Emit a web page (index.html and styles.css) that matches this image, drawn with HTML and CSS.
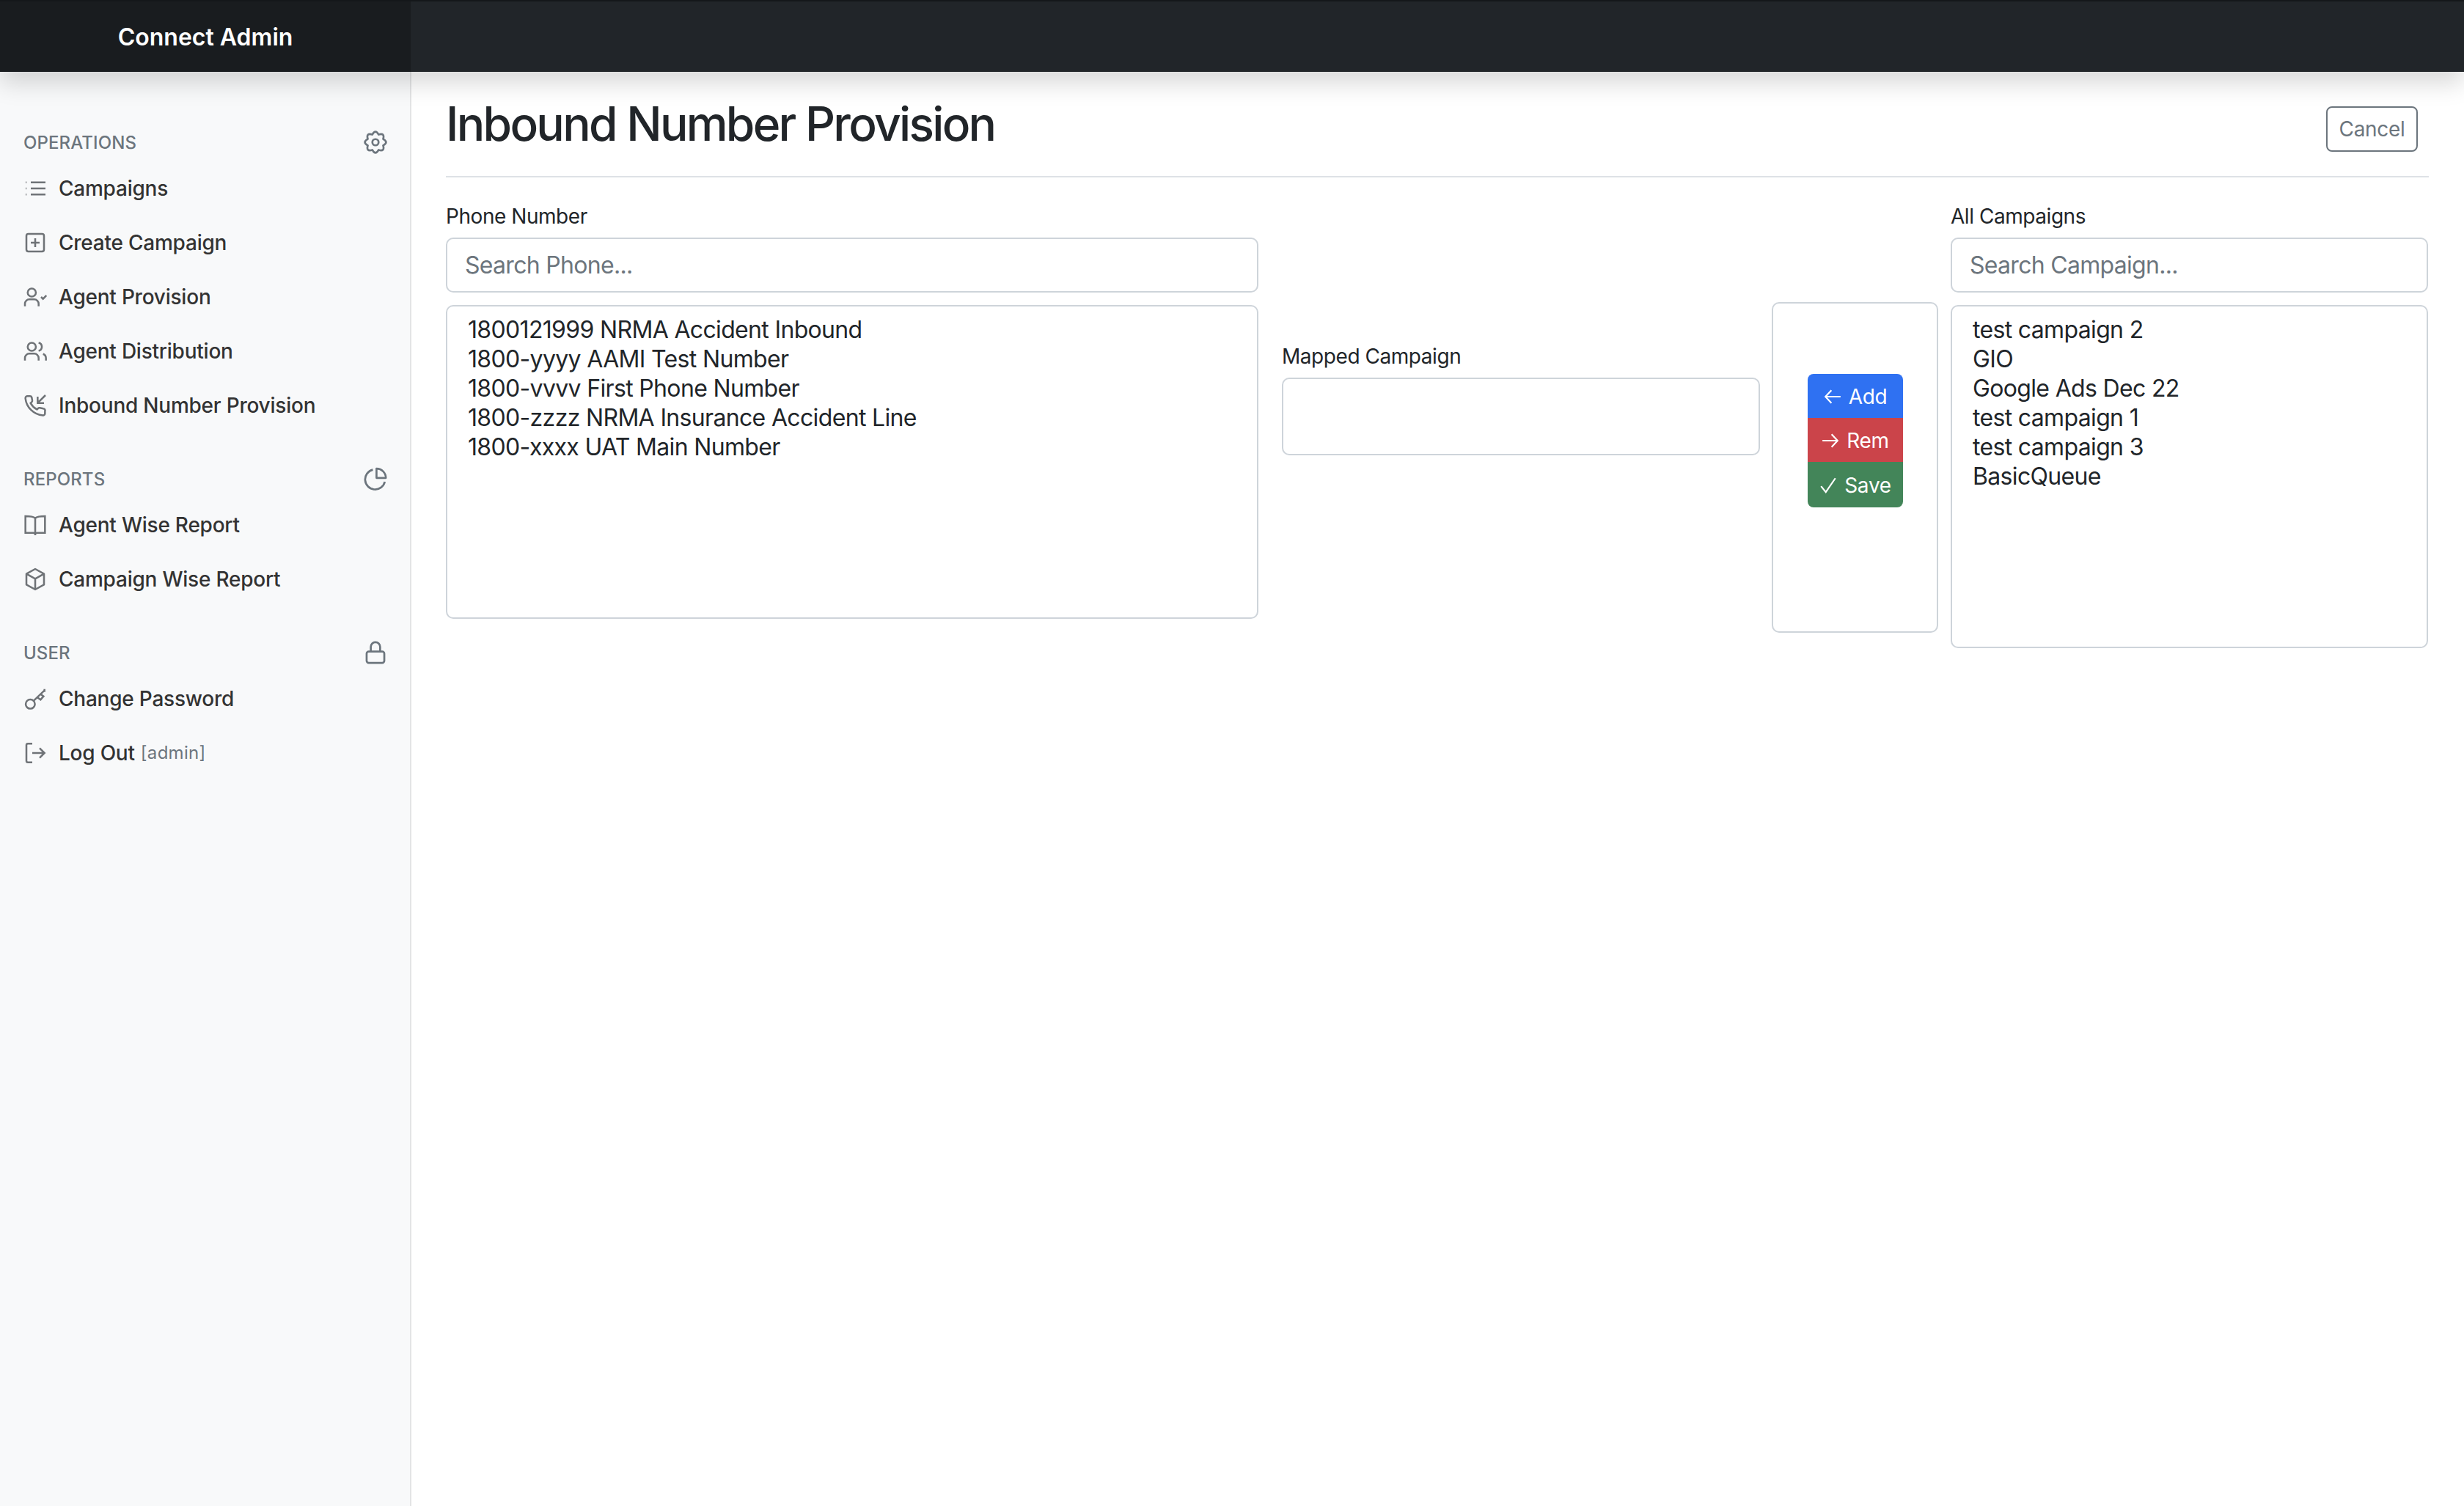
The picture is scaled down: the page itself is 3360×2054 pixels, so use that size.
FILE: index.html
```html
<!DOCTYPE html>
<html lang="en">
<head>
<meta charset="utf-8">
<title>Connect Admin</title>
<link rel="stylesheet" href="styles.css">
</head>
<body>
<svg class="defs" width="0" height="0" aria-hidden="true">
  <defs>
    <symbol id="i-gear" viewBox="0 0 24 24"><path d="M19.39 15.06Q21.19 21.19 15.06 19.39Q12 25 8.94 19.39Q2.81 21.19 4.61 15.06Q-1 12 4.61 8.94Q2.81 2.81 8.94 4.61Q12 -1 15.06 4.61Q21.19 2.81 19.39 8.94Q25 12 19.39 15.06Z" stroke-linejoin="round"/><circle cx="12" cy="12" r="3"/></symbol>
    <symbol id="i-list" viewBox="0 0 24 24"><path d="M7.500 5.800h15M7.500 12h15M7.500 18.200h15"/><path d="M2.300 5.800h.8M2.300 12h.8M2.300 18.200h.8"/></symbol>
    <symbol id="i-plus" viewBox="0 0 24 24"><rect x="3" y="3" width="18" height="18" rx="2"/><path d="M12 7.500v9M7.500 12h9"/></symbol>
    <symbol id="i-pcheck" viewBox="0 0 24 24"><circle cx="8.500" cy="7.500" r="4.200"/><path d="M1.500 21.500v-2.500a4.500 4.500 0 0 1 4.500-4.500h5a4.500 4.500 0 0 1 4.500 4.500v2.500M18 12l2 2 3.500-3.500"/></symbol>
    <symbol id="i-people" viewBox="0 0 24 24"><circle cx="8.500" cy="7.500" r="4.200"/><path d="M1.500 21.500v-2.500a4.500 4.500 0 0 1 4.500-4.500h5a4.500 4.500 0 0 1 4.500 4.500v2.500M15.500 3.400a4.200 4.200 0 0 1 0 8.200M23 21.500v-2.500a4.500 4.500 0 0 0-3-4.200"/></symbol>
    <symbol id="i-phone" viewBox="0 0 24 24"><path d="M22 18v2.200a2 2 0 0 1-2.200 2A19.800 19.800 0 0 1 2 4.700 2 2 0 0 1 4 2.500h2.500a2 2 0 0 1 2 1.700l.5 2.500a2 2 0 0 1-.6 1.800L7.300 9.600a16 16 0 0 0 6.500 6.500l1.100-1.100a2 2 0 0 1 1.800-.6l3.500.8a2 2 0 0 1 1.800 2.800zM22.500 1.500l-8 8M14.500 3v6.500H21"/></symbol>
    <symbol id="i-pie" viewBox="0 0 24 24"><path d="M21 14.800A9.600 9.600 0 1 1 9.500 3.300"/><path d="M13 2.200a9 9 0 0 1 9 9h-9z" stroke-linejoin="round"/></symbol>
    <symbol id="i-book" viewBox="0 0 24 24"><path d="M12 22.500V5C10 3.300 6 3 2 3v17h8c1 0 2 .3 2 1.500 0-1.200 1-1.500 2-1.500h8V3c-4 0-8 .3-10 2"/></symbol>
    <symbol id="i-box" viewBox="0 0 24 24"><path d="M12 1.500l9 5v11L12 22.500 3 17.500v-11zM3 6.500l9 5 9-5M12 11.500v11" stroke-linejoin="round"/></symbol>
    <symbol id="i-lock" viewBox="0 0 24 24"><rect x="3.500" y="11" width="17" height="11" rx="2"/><path d="M7.500 11V6.500a4.500 4.500 0 0 1 9 0V11"/></symbol>
    <symbol id="i-key" viewBox="0 0 24 24"><circle cx="7" cy="17.500" r="4.700"/><path d="M10.500 14L21.500 3.500M21.500 2v3M14 10.500l3.500 2.500 3-3.500-3.500-2.500"/></symbol>
    <symbol id="i-out" viewBox="0 0 24 24"><path d="M9 2.500H4.500a1.500 1.500 0 0 0-1.500 1.500v16a1.500 1.500 0 0 0 1.500 1.500H9M9 12h12.500M16.500 7l5 5-5 5"/></symbol>
    <symbol id="i-left" viewBox="0 0 24 24"><path d="M22 12H3M10.500 4l-7.500 8 7.500 8"/></symbol>
    <symbol id="i-right" viewBox="0 0 24 24"><path d="M2 12h19M13.500 4l7.500 8-7.500 8"/></symbol>
    <symbol id="i-check" viewBox="0 0 24 24"><path d="M3 13l6 7.500L21 3"/></symbol>
  </defs>
</svg>

<header class="topbar">
  <a class="brand">Connect Admin</a>
</header>

<div class="shell">
  <nav class="sidebar">
    <section class="nav-group">
      <h6 class="nav-heading"><span>OPERATIONS</span><svg class="ic ic-head"><use href="#i-gear"/></svg></h6>
      <a class="nav-link"><svg class="ic"><use href="#i-list"/></svg>Campaigns</a>
      <a class="nav-link"><svg class="ic"><use href="#i-plus"/></svg>Create Campaign</a>
      <a class="nav-link"><svg class="ic"><use href="#i-pcheck"/></svg>Agent Provision</a>
      <a class="nav-link"><svg class="ic"><use href="#i-people"/></svg>Agent Distribution</a>
      <a class="nav-link"><svg class="ic"><use href="#i-phone"/></svg>Inbound Number Provision</a>
    </section>
    <section class="nav-group">
      <h6 class="nav-heading"><span>REPORTS</span><svg class="ic ic-head"><use href="#i-pie"/></svg></h6>
      <a class="nav-link"><svg class="ic"><use href="#i-book"/></svg>Agent Wise Report</a>
      <a class="nav-link"><svg class="ic"><use href="#i-box"/></svg>Campaign Wise Report</a>
    </section>
    <section class="nav-group">
      <h6 class="nav-heading"><span>USER</span><svg class="ic ic-head"><use href="#i-lock"/></svg></h6>
      <a class="nav-link"><svg class="ic"><use href="#i-key"/></svg>Change Password</a>
      <a class="nav-link"><svg class="ic"><use href="#i-out"/></svg>Log Out<small class="who">[admin]</small></a>
    </section>
  </nav>

  <main class="main">
    <div class="title-row">
      <h1 class="title">Inbound Number Provision</h1>
      <button class="cancel" type="button">Cancel</button>
    </div>

    <div class="form-grid">
      <div class="col">
        <label class="label">Phone Number</label>
        <input class="field" type="text" placeholder="Search Phone...">
        <div class="listbox list-phone">
          <div>1800121999 NRMA Accident Inbound</div>
          <div>1800-yyyy AAMI Test Number</div>
          <div>1800-vvvv First Phone Number</div>
          <div>1800-zzzz NRMA Insurance Accident Line</div>
          <div>1800-xxxx UAT Main Number</div>
        </div>
      </div>
      <div class="col col-mapped">
        <label class="label">Mapped Campaign</label>
        <div class="mapped"></div>
      </div>
      <div class="col col-actions">
        <div class="actions">
          <div class="btn-stack">
            <button class="btn btn-add" type="button"><svg class="bi"><use href="#i-left"/></svg>Add</button>
            <button class="btn btn-rem" type="button"><svg class="bi"><use href="#i-right"/></svg>Rem</button>
            <button class="btn btn-save" type="button"><svg class="bi"><use href="#i-check"/></svg>Save</button>
          </div>
        </div>
      </div>
      <div class="col">
        <label class="label">All Campaigns</label>
        <input class="field" type="text" placeholder="Search Campaign...">
        <div class="listbox list-camp">
          <div>test campaign 2</div>
          <div>GIO</div>
          <div>Google Ads Dec 22</div>
          <div>test campaign 1</div>
          <div>test campaign 3</div>
          <div>BasicQueue</div>
        </div>
      </div>
    </div>
  </main>
</div>
</body>
</html>
```
FILE: styles.css
```css
* { box-sizing: border-box; }
html, body { margin: 0; height: 100%; }
body {
  font-family: Inter, "Liberation Sans", sans-serif;
  color: #212529;
  background: #fff;
  height: 2054px;
  overflow: hidden;
}
.defs { position: absolute; }
.topbar {
  position: relative;
  z-index: 2;
  height: 98px;
  background: #212529;
  border-top: 2px solid #14171a;
  box-shadow: 0 16px 32px rgba(0, 0, 0, .15);
}
.brand {
  display: flex;
  align-items: center;
  justify-content: center;
  width: 560px;
  height: 96px;
  background: #191c1f;
  color: #fff;
  font-size: 32px;
  font-weight: 600;
}
.shell { display: flex; height: 1956px; }
.sidebar {
  width: 561px;
  flex: none;
  background: #f8f9fa;
  border-right: 2px solid #e3e4e5;
  padding-top: 71px;
}
.nav-group { margin-bottom: 39px; }
.nav-heading {
  display: flex;
  justify-content: space-between;
  align-items: center;
  margin: 0;
  height: 50px;
  padding: 0 30px 0 32px;
  color: #6c757d;
  font-size: 24px;
  font-weight: 500;
  letter-spacing: .1px;
}
.nav-link {
  display: flex;
  align-items: center;
  height: 74px;
  padding-left: 32px;
  padding-top: 1px;
  color: #333;
  font-size: 28px;
  font-weight: 500;
  letter-spacing: -.23px;
}
.ic {
  width: 32px;
  height: 32px;
  margin-right: 16px;
  flex: none;
  fill: none;
  stroke: #6f7377;
  stroke-width: 1.900;
}
.ic-head { margin-right: 0; width: 34px; height: 34px; stroke: #6c757d; }
.who { margin-left: 8px; font-size: 24px; font-weight: 400; color: #6c757d; letter-spacing: .3px; }
.main { flex: 1; padding: 0 48px 0 47px; }
.title-row {
  display: flex;
  justify-content: space-between;
  align-items: flex-start;
  height: 144px;
  border-bottom: 2px solid #dee2e6;
  padding: 33px 15px 0 0;
}
.title { margin: 0; font-size: 64px; line-height: 1.2; font-weight: 500; letter-spacing: -2.7px; }
.cancel {
  margin-top: 14px;
  width: 125px;
  height: 62px;
  background: #fff;
  border: 2px solid #6c757d;
  border-radius: 8px;
  color: #6c757d;
  font: 400 28px Inter, sans-serif;
  letter-spacing: -.3px;
  padding: 0;
}
.form-grid {
  display: grid;
  grid-template-columns: 1108px 668px 228px 651px;
  column-gap: 16px;
  padding-top: 34px;
  align-items: start;
}
.col { display: flex; flex-direction: column; }
.col-mapped { padding: 191px 0 0 16px; }
.col-actions { padding-top: 136px; }
.label { height: 48px; font-size: 28px; line-height: 38px; letter-spacing: -.45px; }
.field {
  height: 75px;
  border: 2px solid #ced4da;
  border-radius: 10px;
  padding: 0 24px;
  font: 400 32px Inter, sans-serif;
  letter-spacing: -.7px;
  color: #212529;
  outline: none;
}
.field::placeholder { color: #6c757d; opacity: 1; }
.listbox {
  margin-top: 17px;
  border: 2px solid #ced4da;
  border-radius: 10px;
  padding: 12px 28px;
  font-size: 32px;
  line-height: 40px;
  letter-spacing: -.66px;
}
.list-phone { height: 428px; }
.list-camp { height: 468px; }
.mapped { height: 106px; border: 2px solid #ced4da; border-radius: 10px; }
.actions {
  width: 227px;
  height: 451px;
  border: 2px solid #ced4da;
  border-radius: 10px;
  display: flex;
  justify-content: center;
}
.btn-stack { display: flex; flex-direction: column; margin-top: 96px; width: 130px; }
.btn {
  display: flex;
  align-items: center;
  justify-content: center;
  height: 60px;
  border: 0;
  color: #fff;
  font: 400 28px Inter, sans-serif;
  letter-spacing: -.3px;
  padding: 2px 0 0;
}
.bi {
  width: 26px;
  height: 26px;
  margin-right: 9px;
  fill: none;
  stroke: #fff;
  stroke-width: 2;
}
.btn-add { background: #2f71f2; border-radius: 8px 8px 0 0; }
.btn-rem { background: #cb444a; }
.btn-save { background: #438559; border-radius: 0 0 8px 8px; height: 62px; }
```
